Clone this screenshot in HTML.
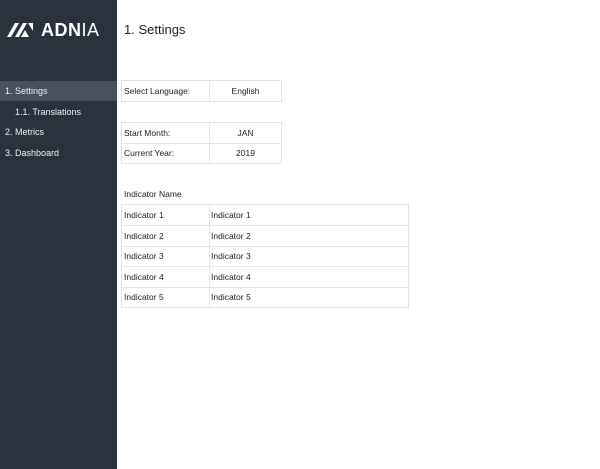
<!DOCTYPE html>
<html><head><style>
body{margin:0;width:600px;height:469px;background:#fff;font-family:"Liberation Sans",sans-serif;position:relative;overflow:hidden}
.sb{position:absolute;left:0;top:0;width:117px;height:469px;background:#2a333d}
.logo{position:absolute;left:41px;top:20px;color:#fff;font-size:18px;letter-spacing:0.5px}
.nav{position:absolute;left:0;width:117px;height:20px;line-height:20px;color:#eef0f2;font-size:9px;box-sizing:border-box;padding-left:5px}
h1{position:absolute;left:124px;top:22px;margin:0;font-weight:normal;font-size:13px;color:#222}
.box{position:absolute;border:1px solid #e2e2e2;box-sizing:border-box}
.r{position:absolute;left:0;right:0;height:20px;line-height:20px;font-size:8.5px;color:#222;border-bottom:1px solid #e6e6e6}
.r:last-child{border-bottom:none}
.c1{position:absolute;left:2px}
.c2{position:absolute;left:88px;width:71px;text-align:center}
.c3{position:absolute;left:89px}
.v{position:absolute;top:0;bottom:0;left:87px;border-left:1px solid #e6e6e6}
</style></head><body>
<div class="sb">
<svg style="position:absolute;left:7px;top:22px" width="28" height="16" viewBox="0 0 28 16"><g fill="#fff"><polygon points="0,15 8,1 12,1 4,15"/><polygon points="8,15 16,1 20,1 12,15"/><polygon points="14,15 18,8 22,15"/><polygon points="21,1 26,1 26,9"/></g></svg>
<div class="logo"><b>ADN</b>IA</div>
<div class="nav" style="top:81px;background:#47525e">1. Settings</div>
<div class="nav" style="top:102px;padding-left:15px">1.1. Translations</div>
<div class="nav" style="top:122px">2. Metrics</div>
<div class="nav" style="top:143px">3. Dashboard</div>
</div>
<h1>1. Settings</h1>
<div class="box" style="left:121px;top:80px;width:161px;height:22px"><div class="v"></div>
<div class="r" style="top:0"><span class="c1">Select Language:</span><span class="c2">English</span></div></div>
<div class="box" style="left:121px;top:122px;width:161px;height:42px"><div class="v"></div>
<div class="r" style="top:0"><span class="c1">Start Month:</span><span class="c2">JAN</span></div>
<div class="r" style="top:20px;border:none"><span class="c1">Current Year:</span><span class="c2">2019</span></div></div>
<div style="position:absolute;left:124px;top:189px;font-size:8.5px;color:#222">Indicator Name</div>
<div class="box" style="left:121px;top:204px;width:288px;height:104px"><div class="v"></div>
<div class="r" style="top:0"><span class="c1">Indicator 1</span><span class="c3">Indicator 1</span></div>
<div class="r" style="top:20.5px"><span class="c1">Indicator 2</span><span class="c3">Indicator 2</span></div>
<div class="r" style="top:41px"><span class="c1">Indicator 3</span><span class="c3">Indicator 3</span></div>
<div class="r" style="top:61.5px"><span class="c1">Indicator 4</span><span class="c3">Indicator 4</span></div>
<div class="r" style="top:82px;border:none"><span class="c1">Indicator 5</span><span class="c3">Indicator 5</span></div>
</div>
</body></html>
